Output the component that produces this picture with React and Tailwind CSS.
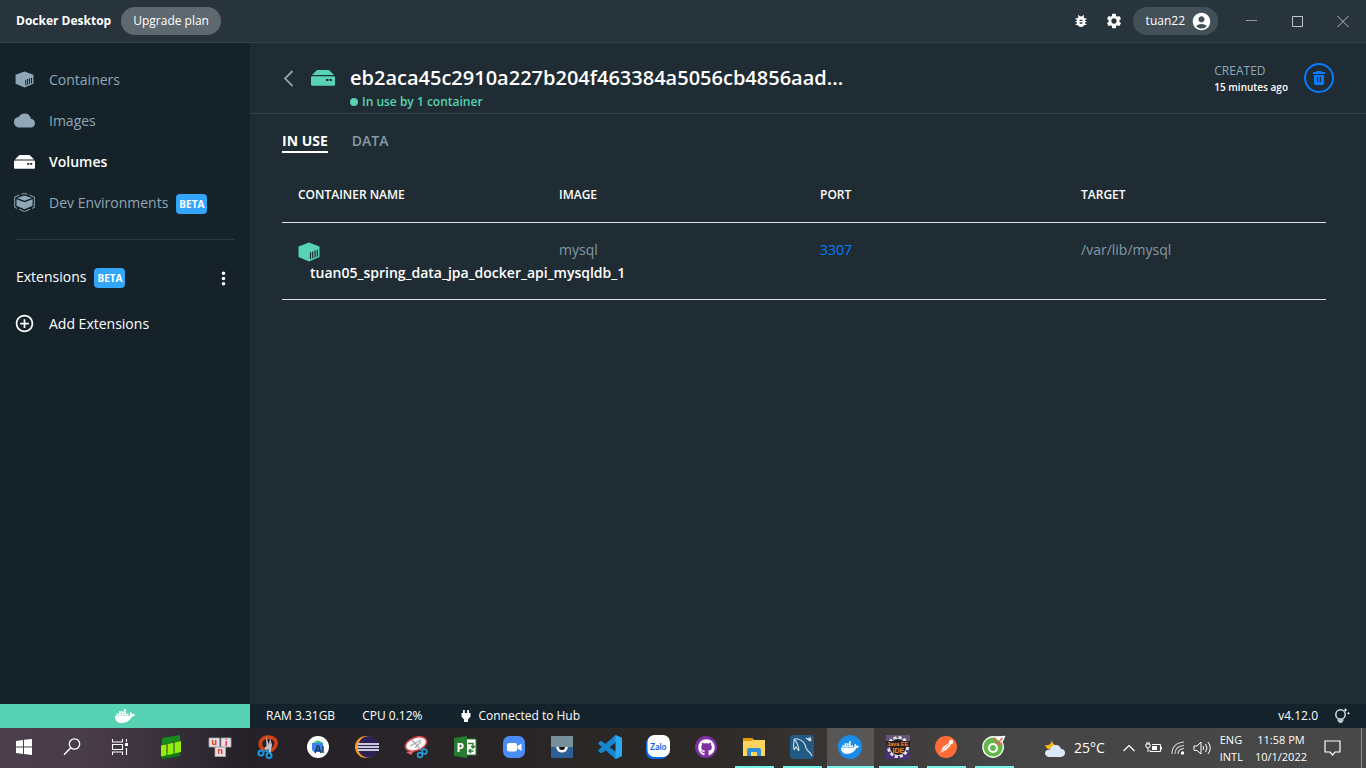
import React from "react";
import { MdBugReport, MdSettings, MdAccountCircle, MdMoreVert, MdAddCircleOutline, MdCloud } from "react-icons/md";
import { FaDocker, FaGithub } from "react-icons/fa";

function ContainerIcon({ className, gap }) {
  return (
    <svg viewBox="0 0 22 20" className={className} aria-hidden="true">
      <path d="M11 0.5 L21.5 4.5 V15 L11 19.5 L0.5 15 V4.5 Z" fill="currentColor" />
      <path d="M12.5 10.2 V17 M14.7 9.4 V16.2 M17 8.6 V15.4 M19.3 7.8 V14.6" stroke={gap} strokeWidth="1.2" />
    </svg>
  );
}

function VolumeIcon({ className, gap }) {
  return (
    <svg viewBox="0 0 24 16" className={className} aria-hidden="true">
      <path d="M7 0 H17 Q18 0 19 1 L23 5 H1 L5 1 Q6 0 7 0 Z" fill="currentColor" />
      <rect x="0" y="6.2" width="24" height="9.6" rx="1.2" fill="currentColor" />
      <path d="M15 9 h2.4 v2 h-2.4z M18.4 9 h2.4 v2 h-2.4z" fill={gap} />
    </svg>
  );
}

function DevIcon() {
  return (
    <svg viewBox="0 0 21 19" className="h-[19px] w-[21px]" aria-hidden="true">
      <path d="M10.5 2.4 L18 5 L10.500 7.800 L3 5 Z" fill="currentColor" />
      <path d="M2.500 6.300 L10.500 9.300 L18.500 6.300 V12.800 L10.500 16.200 L2.500 12.800 Z" fill="currentColor" />
      <path d="M7.500 1.200 L10.500 .4 L13.500 1.200 M15.500 2 L20.300 4 V7 M.7 7 V4 L5.500 2 M.7 7 V14.400 L3 15.400 M5 16.300 L10.500 18.500 L16 16.300 M18 15.400 L20.300 14.400 V7" fill="none" stroke="currentColor" strokeWidth="1" />
    </svg>
  );
}

function Beta() {
  return <span className="mt-[3px] rounded bg-[#33a6f9] px-[3px] text-[10px] leading-5 font-bold text-white">BETA</span>;
}

const nav = [
  { label: "Containers", icon: <ContainerIcon className="h-[17px] w-[19px]" gap="#15222a" /> },
  { label: "Images", icon: <MdCloud className="size-[21px]" /> },
  { label: "Volumes", icon: <VolumeIcon className="h-[14px] w-[21px]" gap="#15222a" />, active: true },
  { label: "Dev Environments", icon: <DevIcon />, beta: true },
];

function TitleBar() {
  return (
    <header className="flex h-[43px] items-center border-b border-[#33434b] bg-[#28343b] pl-4 text-white">
      <h1 className="text-xs font-bold">Docker Desktop</h1>
      <button className="ml-[10px] h-7 rounded-full bg-[#5d686f] px-3 text-xs">Upgrade plan</button>
      <div className="ml-auto flex items-center">
        <button aria-label="Troubleshoot" className="mr-4"><MdBugReport className="size-4" /></button>
        <button aria-label="Settings" className="mr-[10px]"><MdSettings className="size-[18px]" /></button>
        <button className="flex h-7 items-center gap-[6px] rounded-full bg-[#435058] pr-[6px] pl-[13px] text-xs">
          tuan22 <MdAccountCircle className="size-[21px]" />
        </button>
        <button aria-label="Minimize" className="ml-[10px] grid h-9 w-[46px] place-items-center">
          <svg viewBox="0 0 12 12" className="size-3"><path d="M1 5.500h11" stroke="#929a9e" /></svg>
        </button>
        <button aria-label="Maximize" className="grid h-9 w-[46px] place-items-center">
          <svg viewBox="0 0 12 12" className="size-3"><path d="M1.500 1.500h10v10h-10z" fill="none" stroke="#c0c4c6" /></svg>
        </button>
        <button aria-label="Close" className="grid h-9 w-[46px] place-items-center">
          <svg viewBox="0 0 12 12" className="size-3"><path d="M.5 1l11 11M11.500 1l-11 11" stroke="#b5babd" /></svg>
        </button>
      </div>
    </header>
  );
}

function Sidebar() {
  return (
    <aside className="flex w-[250px] shrink-0 flex-col bg-[#15222a] pt-4 text-sm">
      <nav>
        {nav.map((n) => (
          <a key={n.label} href="#" className={n.active ? "flex h-[41px] items-center pl-[14px] font-semibold text-white" : "flex h-[41px] items-center pl-[14px] text-[#8fa7b6]"}>
            <span className="mr-[14px] grid w-[21px] place-items-center">{n.icon}</span>
            <span className="mr-2">{n.label}</span>
            {n.beta && <Beta />}
          </a>
        ))}
      </nav>
      <hr className="mx-4 mt-4 border-[#2b3a42]" />
      <div className="mt-4 flex h-[41px] items-center pr-4 pl-4 text-white">
        <span className="mr-2">Extensions</span>
        <Beta />
        <button aria-label="Extension options" className="mt-[3px] ml-auto"><MdMoreVert className="size-[21px]" /></button>
      </div>
      <a href="#" className="mt-[6px] flex h-[41px] items-center pl-[14px] text-white">
        <span className="mr-[14px] grid w-[21px] place-items-center"><MdAddCircleOutline className="size-[21px]" /></span>
        Add Extensions
      </a>
    </aside>
  );
}

function Volume() {
  return (
    <main className="min-w-0 flex-1 bg-[#202c33]">
      <div className="flex items-start border-b border-[#33434b] pt-5 pr-8 pb-[2px] pl-8">
        <button aria-label="Back" className="grid h-[30px] w-[13px] place-items-center">
          <svg viewBox="0 0 11 17" className="h-[17px] w-[11px]"><path d="M9.500 1L2 8.500L9.500 16" fill="none" stroke="#8ba1ae" strokeWidth="1.8" /></svg>
        </button>
        <div className="ml-4 grid h-[30px] place-items-center text-[#57d3b4]"><VolumeIcon className="h-4 w-6" gap="#202c33" /></div>
        <div className="ml-[15px] min-w-0">
          <h2 className="truncate text-xl leading-[30px] font-semibold text-white">eb2aca45c2910a227b204f463384a5056cb4856aad...</h2>
          <p className="flex items-center gap-1 text-xs leading-[18px] font-semibold text-[#57d3b4]">
            <span className="size-2 rounded-full bg-[#57d3b4]" />In use by 1 container
          </p>
        </div>
        <div className="ml-auto shrink-0">
          <p className="text-xs leading-4 font-medium text-[#8fa7b6]">CREATED</p>
          <p className="text-[10px] leading-[17px] font-semibold text-white">15 minutes ago</p>
        </div>
        <button aria-label="Delete volume" className="ml-4 grid size-[30px] shrink-0 place-items-center rounded-full border-2 border-[#087cff] text-[#087cff]">
          <svg viewBox="0 0 14 16" className="h-4 w-[14px]">
            <path d="M4.500 1h5v1h3.500v2H1V2h3.500z" fill="currentColor" />
            <path d="M2 5h10v8.500q0 1.500-1.500 1.500h-7q-1.500 0-1.500-1.500z M5 7v5h1.200V7z M7.800 7v5H9V7z" fill="currentColor" fillRule="evenodd" />
          </svg>
        </button>
      </div>
      <div className="pr-10 pl-8">
        <div role="tablist" className="flex gap-6 pt-[17px] text-sm leading-5">
          <button role="tab" aria-selected="true" className="border-b-2 border-white font-bold text-white">IN USE</button>
          <button role="tab" aria-selected="false" className="border-b-2 border-transparent font-semibold text-[#8399a6]">DATA</button>
        </div>
        <table className="mt-[14px] w-full table-fixed border-separate border-spacing-0 text-left text-sm leading-[22px]">
          <thead>
            <tr className="h-14 text-xs text-white">
              {["CONTAINER NAME", "IMAGE", "PORT", "TARGET"].map((h) => (
                <th key={h} scope="col" className="border-b border-[#dfe2e3] px-4 font-semibold">{h}</th>
              ))}
            </tr>
          </thead>
          <tbody>
            <tr className="align-top text-[#8399a6]">
              <td className="border-b border-[#dfe2e3] px-4 pt-4 pb-[15px] whitespace-nowrap">
                <div className="flex h-[23px] items-end text-[#57d3b4]"><ContainerIcon className="h-5 w-[22px]" gap="#202c33" /></div>
                <div className="ml-3 font-semibold text-white">tuan05_spring_data_jpa_docker_api_mysqldb_1</div>
              </td>
              <td className="border-b border-[#dfe2e3] px-4 pt-4">mysql</td>
              <td className="border-b border-[#dfe2e3] px-4 pt-4"><a href="#" className="text-[#087cff]">3307</a></td>
              <td className="border-b border-[#dfe2e3] px-4 pt-4">/var/lib/mysql</td>
            </tr>
          </tbody>
        </table>
      </div>
    </main>
  );
}

function StatusBar() {
  return (
    <footer className="flex h-6 items-center bg-[#14232b] text-xs text-white">
      <div className="grid h-full w-[250px] shrink-0 place-items-center bg-[#57d3b4]"><FaDocker className="h-4 w-5" /></div>
      <span className="ml-4">RAM 3.31GB</span>
      <span className="ml-[27px]">CPU 0.12%</span>
      <svg viewBox="0 0 10 13" className="mr-[7px] ml-[39px] h-[13px] w-[10px]" fill="#fff">
        <path d="M2 0h1.800v3H2zM6.200 0H8v3H6.200zM.5 3h9v3.500L7 9.500V12H3V9.500L.5 6.500z" />
      </svg>
      <span>Connected to Hub</span>
      <span className="mr-4 ml-auto">v4.12.0</span>
      <svg viewBox="0 0 16 16" className="mr-4 size-4">
        <circle cx="6.500" cy="6.500" r="4.700" fill="none" stroke="#d8dcde" strokeWidth="1.500" />
        <path d="M3.500 10.500h6V13l-2 2h-2l-2-2z" fill="#bfc5c8" />
        <path d="M11.500 .5v3M10 2h3M14.500 4.200v2.200M13.400 5.300h2.200" stroke="#fff" strokeWidth=".9" />
      </svg>
    </footer>
  );
}

const Pic = ({ children }) => <svg viewBox="0 0 24 24" className="size-6" aria-hidden="true">{children}</svg>;

const systemApps = [
  ["Start", <Pic><path d="M4 6l7-1v6.500H4zM12 4.800L20 4v7.500h-8zM4 12.500h7V19l-7-1zM12 12.500h8V20l-8-1z" fill="#fff" /></Pic>],
  ["Search", <Pic><circle cx="14.500" cy="9" r="5.200" fill="none" stroke="#fff" strokeWidth="1.300" /><path d="M10.800 12.800L4 19.700" stroke="#fff" strokeWidth="1.400" /></Pic>],
  ["Task View", <Pic><path d="M4.500 4v3h10V4M4.500 20v-3h10v3M4.500 9.500h10v5h-10zM18.500 4v3M18.500 13v7" fill="none" stroke="#fff" strokeWidth="1.100" /><path d="M17 8h3v3h-3z" fill="#fff" /></Pic>],
];

const pinnedApps = [
  ["Task board", <Pic><path d="M3 3l18-3v6L3 10z" fill="#178a1e" /><path d="M3 18l18-3v6L3 24z" fill="#107a18" /><path d="M2 10.500l5.500-1.200v11L2 21.500zM8.500 9l6-1.300v11l-6 1.300zM15.500 7.400l6.500-1.500v11l-6.500 1.500z" fill="#93ee0c" /></Pic>],
  ["Unikey", <Pic><g fill="#e4e2e2" stroke="#a9a4a6" strokeWidth=".8"><path d="M1 3h10.500v9H1zM13 3h10v9H13zM7 12h10.500v9.500H7z" /></g><g fill="#ef2525" fontFamily="Liberation Sans, sans-serif" fontWeight="bold" fontSize="9"><text x="3.500" y="10">u</text><text x="17" y="10.500">i</text><text x="9.500" y="19">n</text></g></Pic>],
  ["Screen clipping", <Pic><path d="M8 15Q1.500 12 4 6Q6 2 12 2Q20 3 19 9Q18 14 13 16" fill="none" stroke="#d64013" strokeWidth="3.600" /><path d="M9 1l3 9 1-7 2 7-1.500 8-3 1-3-6 2-2z" fill="#c3c6c8" /><circle cx="4" cy="18" r="2.500" fill="none" stroke="#1b9ae0" strokeWidth="2" /><circle cx="12" cy="20.500" r="2.500" fill="none" stroke="#1b9ae0" strokeWidth="2" /><path d="M6 17l5-2v4" fill="none" stroke="#1b7fc0" strokeWidth="1.600" /></Pic>],
  ["Android Studio", <Pic><circle cx="12" cy="12" r="11" fill="#fff" /><path d="M7 8q5-5 10 0v2H7z" fill="#35c97c" /><path d="M6 8h11v9H8l-2-2z" fill="#3f82ef" /><path d="M9 18l2.500-7h1l2.500 7M10 15.500h4M17 11v7" stroke="#173c61" strokeWidth="1.500" fill="none" /></Pic>],
  ["Eclipse", <Pic><circle cx="11" cy="12" r="11" fill="#f79a28" /><circle cx="13.500" cy="12" r="10.700" fill="#2c2255" /><path d="M3 9h21M2.500 12h22M3 15h21" stroke="#fff" strokeWidth="1.500" /></Pic>],
  ["Snipping Tool", <Pic><ellipse cx="12" cy="9" rx="11" ry="6.500" transform="rotate(-20 12 9)" fill="#fafafa" stroke="#d74747" strokeWidth="1.600" /><path d="M6 11l11-6M8 5l9 10M11 13l6-6" stroke="#a8abad" strokeWidth="1.200" /><path d="M2 17l8-1-3 4z" fill="#e56970" /><circle cx="16" cy="20" r="2.400" fill="none" stroke="#269ddb" strokeWidth="1.600" /><circle cx="20.500" cy="16.500" r="2.400" fill="none" stroke="#269ddb" strokeWidth="1.600" /></Pic>],
  ["Project", <Pic><path d="M13 4h10v16H13z" fill="#fff" stroke="#2e7d32" /><path d="M15 8.500h5v4M18 11l2 2 2-2M20.500 16h-4M18 14l-2 2 2 2" fill="none" stroke="#2e7d32" strokeWidth="1.500" /><path d="M1 3l13-2v22L1 21z" fill="#287b30" /><text x="3.500" y="16.500" fill="#fff" fontFamily="Open Sans, sans-serif" fontWeight="bold" fontSize="12">P</text></Pic>],
];

const runningApps = [
  ["Zoom", <Pic><rect x="1" y="1" width="22" height="22" rx="6.500" fill="#4b8df8" /><rect x="5" y="8" width="10" height="8.500" rx="2" fill="#fff" /><path d="M15.500 11l4-2.500v7.500l-4-2.500z" fill="#fff" /></Pic>],
  ["Viewer", <Pic><path d="M1 1h22v11H1z" fill="#78909c" /><path d="M1 12h22v11H1z" fill="#2d5f97" /><path d="M6 12h12q-1 5.500-6 5.500T6 12z" fill="#fff" /><path d="M9 12h6q0 3-3 3t-3-3z" fill="#111" /></Pic>],
  ["Visual Studio Code", <Pic><path d="M17.500 0L24 3v18l-6.500 3L.5 9V7.500L2.500 6 5 7l13 10V7L5 17.500 2.500 18 .5 16.500V15z" fill="#1687cf" /><path d="M17.500 0L24 3v18l-6.500 3z" fill="#2aa9f2" /></Pic>],
  ["Zalo", <Pic><rect x="0" y="1" width="22" height="23" rx="7" fill="#0767ee" /><rect x="1.500" y="0" width="22.500" height="22" rx="7" fill="#fff" /><text x="4" y="14.500" fill="#1268e8" fontFamily="Lato, sans-serif" fontWeight="bold" fontSize="8.500">Zalo</text></Pic>],
  ["GitHub Desktop", <span className="grid size-[22px] place-items-center rounded-full bg-[#8030a0] text-white"><FaGithub className="size-[17px]" /></span>],
  ["File Explorer", <Pic><path d="M1 3h9l2 2h11v16H1z" fill="#ffd35d" /><path d="M1 3h9l1 2-1 1H1z" fill="#e59b08" /><path d="M5 21v-6q0-2 2-2h10q2 0 2 2v6h-4v-4H9v4z" fill="#318fd5" /></Pic>, "open"],
  ["MySQL Workbench", <Pic><rect width="24" height="24" rx="3" fill="#225a84" /><path d="M4 15q-1-5 0-9 0-3 4-2 7 2 8 9l2 3q2 1 4 5M4 15l2-3 3 4M4 4q4 4 5 11M16 3l4 3M18 3l3 3M20 2l1 4" fill="none" stroke="#d0dfe8" strokeWidth="1.100" /></Pic>, "open"],
  ["Docker Desktop", <span className="grid size-6 place-items-center rounded-full bg-[#1a8ce9] text-white"><FaDocker className="h-[15px] w-[18px]" /></span>, "active"],
  ["Java EE IDE", <Pic><path d="M0 0h24v24H0z" fill="#4a307b" /><path d="M0 0h24v8H0z" fill="#66547a" /><circle cx="12" cy="12" r="9.500" fill="none" stroke="#e8e8e8" strokeWidth="3" strokeDasharray="3 2" /><circle cx="12" cy="12" r="8.500" fill="#232026" stroke="#ddd" /><path d="M0 6h24v6H0z" fill="#2a2028" /><g fill="#ff8a18" fontFamily="Liberation Sans, sans-serif" fontWeight="bold"><text x="1" y="11" fontSize="5.500">Java EE</text><text x="6.500" y="18" fontSize="7">IDE</text></g></Pic>, "open"],
  ["Postman", <Pic><circle cx="12" cy="12" r="11" fill="#ff6c37" /><path d="M6 18l3-6 6-4 2 2-5 5z" fill="#fff" /><circle cx="17" cy="7" r="2.200" fill="#fff" /><path d="M7 17l8-8" stroke="#ff6c37" strokeWidth=".7" /></Pic>, "open"],
  ["Coc Coc", <Pic><path d="M22.500 1.500L20 7a10.200 10.200 0 1 1-6-4.800z" fill="#60b94a" stroke="#fff" strokeWidth="1.400" /><path d="M12 1.500h10.500L19 8z" fill="#fff" /><circle cx="11" cy="13" r="4" fill="none" stroke="#fff" strokeWidth="2.200" /><path d="M12.500 3l1.500 5M15 9l5.500-6M16 10l4-2" stroke="#ef604e" strokeWidth="1.500" /></Pic>, "open"],
];

function TaskButton({ app, wide }) {
  const [name, icon, state] = app;
  return (
    <button aria-label={name} className={wide ? "flex h-full w-[49px] flex-col items-center" : "flex h-full w-12 flex-col items-center"}>
      <span className={state === "active" ? "grid h-[38px] w-[47px] place-items-center bg-[#595756]" : "grid h-[38px] w-[47px] place-items-center"}>{icon}</span>
      {state && <span className={state === "active" ? "h-[2px] w-[47px] bg-[#76f2e6]" : "h-[2px] w-[39px] bg-[#76f2e6]"} />}
    </button>
  );
}

function Taskbar() {
  return (
    <div className="flex h-10 items-center bg-[linear-gradient(to_right,#4b3f4c_0%,#483c48_7%,#252128_18%,#2d2926_52%,#464545_72%,#484848_100%)] text-white">
      <div className="mr-[2px] flex h-full">{systemApps.map((a) => <TaskButton key={a[0]} app={a} />)}</div>
      <div className="mr-px flex h-full">{pinnedApps.map((a) => <TaskButton key={a[0]} app={a} wide />)}</div>
      <div className="flex h-full">{runningApps.map((a) => <TaskButton key={a[0]} app={a} />)}</div>
      <div className="ml-auto flex h-full items-center">
        <svg viewBox="0 0 22 20" className="mr-2 h-5 w-[22px]" aria-hidden="true">
          <path d="M8 0q-1 6 5 8-1 4-6 4-5-1-6-5 4 1 6-2 1-2 1-5z" fill="#f9b81e" />
          <path d="M5 19q-4-1-4-4 1-4 5-3 1-5 6-5 4 0 5 4 4 0 4 4 0 3-4 4z" fill="#dbe8fa" />
        </svg>
        <span className="mr-[18px] text-sm">25°C</span>
        <svg viewBox="0 0 12 8" className="mr-[10px] h-2 w-3"><path d="M.5 7L6 1.500 11.500 7" fill="none" stroke="#fff" strokeWidth="1.200" /></svg>
        <svg viewBox="0 0 17 12" className="mr-[9px] h-3 w-[17px]">
          <path d="M7 2.500h8.500v7H5V8M16.500 5v2.500M1 2h4v3q-2 2-4 0zM2 2V0M4 2V0M3 6v4" fill="none" stroke="#fff" strokeWidth="1" />
          <path d="M7 4h5v4H7z" fill="#fff" />
        </svg>
        <svg viewBox="0 0 14 14" className="mr-2 size-[14px]">
          <path d="M1 13Q1 2 13 1M4 13Q4 5 13 4.500M7 13Q7 8 13 7.500" fill="none" stroke="#d8d8d8" strokeWidth="1.100" />
          <circle cx="11.500" cy="12" r="1.700" fill="#fff" />
        </svg>
        <svg viewBox="0 0 18 14" className="mr-[9px] h-[14px] w-[18px]">
          <path d="M1 5h3l4-4v12L4 9.500H1zM10 5q1.500 2 0 4M12.500 3q3 4 0 8M15 1q4.500 6 0 12" fill="none" stroke="#fff" strokeWidth="1" />
        </svg>
        <span className="mr-3 text-[11px] leading-[17px]">ENG<br />INTL</span>
        <span className="mr-[17px] text-center text-[11px] leading-[17px]">11:58 PM<br />10/1/2022</span>
        <button aria-label="Notifications" className="mr-5">
          <svg viewBox="0 0 17 16" className="h-4 w-[17px]"><path d="M1 1h15v11h-5l-2.500 3L6 12H1z" fill="none" stroke="#fff" strokeWidth="1.200" /></svg>
        </button>
        <div className="mr-1 h-full w-px bg-[#8a8a8a]" />
      </div>
    </div>
  );
}

export default function App() {
  return (
    <div className="flex min-h-screen flex-col bg-[#202c33] font-['Open_Sans',sans-serif]">
      <TitleBar />
      <div className="flex flex-1">
        <Sidebar />
        <Volume />
      </div>
      <StatusBar />
      <Taskbar />
    </div>
  );
}
